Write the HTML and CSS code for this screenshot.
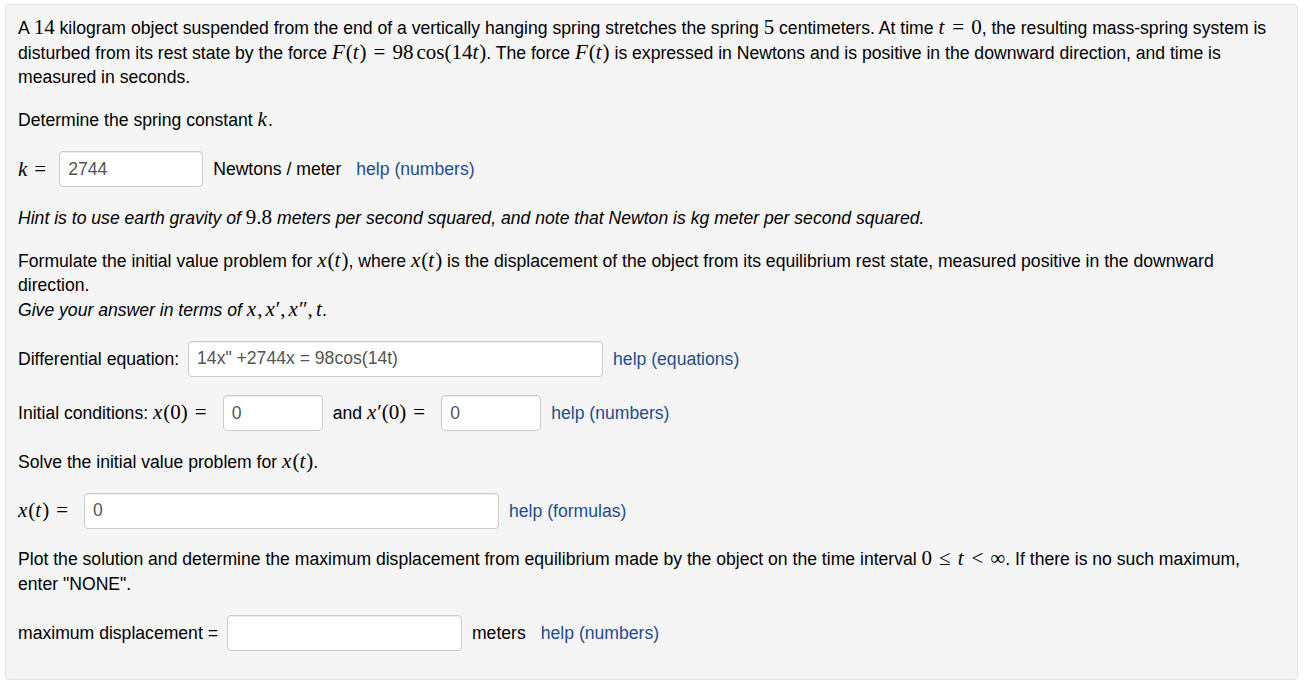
FILE: index.html
```html
<!DOCTYPE html>
<html>
<head>
<meta charset="utf-8">
<link rel="stylesheet" href="styles.css">
</head>
<body>
<div class="problem">
  <p>A <span class="m">14</span> kilogram object suspended from the end of a vertically hanging spring stretches the spring <span class="m">5</span> centimeters. At time <span class="m"><i>t</i><span class="op">=</span>0</span>, the resulting mass-spring system is disturbed from its rest state by the force <span class="m"><i>F</i>(<i>t</i>)<span class="op">=</span>98<span class="th"></span>cos(14<i>t</i>)</span>. The force <span class="m"><i>F</i>(<i>t</i>)</span> is expressed in Newtons and is positive in the downward direction, and time is measured in seconds.</p>

  <p>Determine the spring constant <span class="m"><i>k</i></span>.</p>

  <div class="row">
    <span class="m"><i>k</i><span class="op op-k">=</span></span>
    <input class="ans w-k" type="text" value="2744">
    <span>Newtons / meter</span>
    <a class="help after-unit" href="#">help (numbers)</a>
  </div>

  <p class="hint">Hint is to use earth gravity of <span class="m">9.8</span> meters per second squared, and note that Newton is kg meter per second squared.</p>

  <p>Formulate the initial value problem for <span class="m"><i>x</i>(<i>t</i>)</span>, where <span class="m"><i>x</i>(<i>t</i>)</span> is the displacement of the object from its equilibrium rest state, measured positive in the downward direction.<br><em>Give your answer in terms of <span class="m"><i>x</i>,<span class="th"></span><i>x</i>′,<span class="th"></span><i>x</i>″,<span class="th"></span><i>t</i></span>.</em></p>

  <div class="row">
    <span>Differential equation:</span>
    <input class="ans w-long" type="text" value="14x&quot; +2744x = 98cos(14t)">
    <a class="help" href="#">help (equations)</a>
  </div>

  <div class="row">
    <span>Initial conditions: <span class="m"><i>x</i>(0)<span class="op">=</span></span></span>
    <input class="ans w-small" type="text" value="0">
    <span>and <span class="m"><i>x</i>′(0)<span class="op">=</span></span></span>
    <input class="ans w-small" type="text" value="0">
    <a class="help" href="#">help (numbers)</a>
  </div>

  <p>Solve the initial value problem for <span class="m"><i>x</i>(<i>t</i>)</span>.</p>

  <div class="row">
    <span class="m"><i>x</i>(<i>t</i>)<span class="op">=</span></span>
    <input class="ans w-long" type="text" value="0">
    <a class="help" href="#">help (formulas)</a>
  </div>

  <p>Plot the solution and determine the maximum displacement from equilibrium made by the object on the time interval <span class="m">0<span class="op">≤</span><i>t</i><span class="op">&lt;</span>∞</span>. If there is no such maximum, enter "NONE".</p>

  <div class="row">
    <span>maximum displacement =</span>
    <input class="ans w-max" type="text" value="">
    <span>meters</span>
    <a class="help after-unit" href="#">help (numbers)</a>
  </div>
</div>
</body>
</html>
```

FILE: styles.css
```css
html, body {
  margin: 0;
  padding: 0;
  background: #ffffff;
}

body {
  font-family: "Liberation Sans", Arial, sans-serif;
  font-size: 17.6px;
  color: #000;
}

.problem {
  margin: 4px 6px 0 5px;
  padding: 11px 22px 28px 12px;
  background: #f5f5f5;
  border: 1px solid #e3e3e3;
  border-radius: 4px;
  display: flex;
  flex-direction: column;
  gap: 18.5px;
}

.problem p {
  margin: 0;
  line-height: 24.5px;
}

.hint {
  font-style: italic;
}

.m {
  font-family: "Liberation Serif", "Times New Roman", serif;
  font-size: 21px;
  line-height: 1;
  font-style: normal;
}

.m i {
  font-style: italic;
  margin-right: 1px;
}

.op {
  margin: 0 7px;
}

.op-k {
  margin: 0 4px 0 6px;
}

.th {
  display: inline-block;
  width: 3px;
}

.row {
  display: flex;
  align-items: center;
  height: 36px;
  line-height: 24px;
}

.ans {
  box-sizing: border-box;
  height: 36px;
  margin: 0 10px 0 9px;
  padding: 6px 8px;
  font-family: "Liberation Sans", Arial, sans-serif;
  font-size: 17.6px;
  color: #555;
  background: #fff;
  border: 1px solid #ccc;
  border-radius: 4px;
  box-shadow: inset 0 1px 1px rgba(0, 0, 0, 0.075);
  outline: none;
}

.w-k { width: 144px; }
.w-long { width: 415px; }
.w-small { width: 100px; }
.w-max { width: 235px; }

.help {
  color: #1f4b91;
  text-decoration: none;
}

.after-unit {
  margin-left: 15px;
}
```
